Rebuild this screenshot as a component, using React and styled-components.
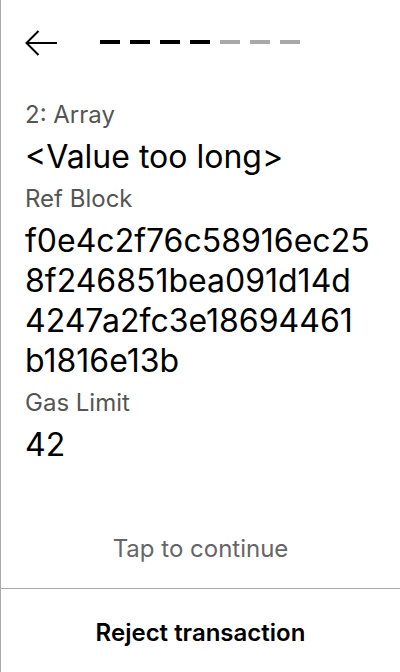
import React from 'react';
import styled, { createGlobalStyle } from 'styled-components';

const GlobalStyle = createGlobalStyle`
  html, body {
    margin: 0;
    padding: 0;
    background: #fff;
  }
  body {
    font-family: Inter, "Noto Sans", sans-serif;
    color: #000;
  }
`

const Screen = styled.div`
  width: 400px;
  height: 672px;
  box-sizing: border-box;
  border-left: 1px solid #a9a9a9;
  display: flex;
  flex-direction: column;
`

const Header = styled.div`
  display: flex;
  align-items: center;
  height: 86px;
  padding-left: 24px;
  box-sizing: border-box;
`

const BackButton = styled.button`
  border: 0;
  background: none;
  padding: 0;
  width: 32px;
  height: 26px;
  display: flex;
  align-items: center;
  cursor: pointer;
`

const Steps = styled.div`
  display: flex;
  gap: 10px;
  margin-left: 43px;
  margin-top: -2px;
`

const Dash = styled.span`
  width: 20px;
  height: 4px;
  background: ${p => (p.$done ? '#000' : '#a8a8a8')};
`

const Body = styled.div`
  flex: 1;
  padding: 11px 25px 0 24px;
  display: flex;
  flex-direction: column;
`

const Label = styled.div`
  font-size: 24px;
  line-height: 36px;
  color: #555;
  margin-bottom: 4px;
`

const Value = styled.div`
  font-size: 32px;
  line-height: 40px;
  margin-bottom: 4px;
  word-break: break-all;
`

const Line = styled.span`
  display: block;
`

const Hint = styled.div`
  text-align: center;
  font-size: 24px;
  color: #666;
  padding-bottom: 25px;
`

const Footer = styled.button`
  border: 0;
  border-top: 1px solid #a9a9a9;
  background: #fff;
  height: 84px;
  padding: 3px 0 0;
  font-family: inherit;
  font-size: 24px;
  font-weight: 600;
  color: #000;
  cursor: pointer;
`

const fields = [
  { label: '2: Array', value: ['<Value too long>'] },
  { label: 'Ref Block', value: ['f0e4c2f76c58916ec25', '8f246851bea091d14d', '4247a2fc3e18694461', 'b1816e13b'] },
  { label: 'Gas Limit', value: ['42'] },
]

export default function App() {
  return (
    <>
      <GlobalStyle />
      <Screen>
        <Header>
          <BackButton aria-label="Back">
            <svg width="32" height="26" viewBox="0 0 32 26" fill="none" stroke="#000" strokeWidth="2">
              <path d="M32 13H1.5" />
              <path d="M13.5 1L1.5 13L13.5 25" />
            </svg>
          </BackButton>
          <Steps>
            {[0, 1, 2, 3, 4, 5, 6].map(i => (
              <Dash key={i} $done={i < 4} />
            ))}
          </Steps>
        </Header>
        <Body>
          {fields.map((f, idx) => (
            <React.Fragment key={idx}>
              <Label>{f.label}</Label>
              <Value>
                {f.value.map((line, j) => <Line key={j}>{line}</Line>)}
              </Value>
            </React.Fragment>
          ))}
        </Body>
        <Hint>Tap to continue</Hint>
        <Footer>Reject transaction</Footer>
      </Screen>
    </>
  )
}
